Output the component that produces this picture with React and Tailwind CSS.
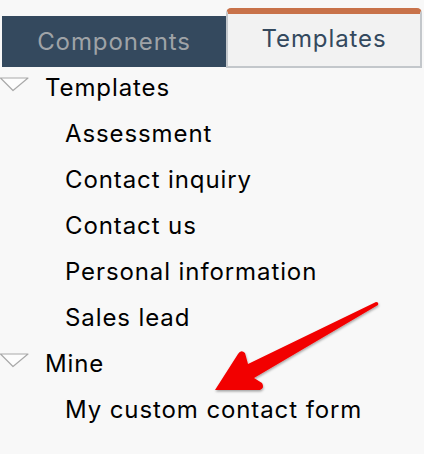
const font = { fontFamily: "Inter, 'Open Sans', sans-serif" };

const Caret = () => (
  <svg width="29" height="15" viewBox="0 0 29 15" className="shrink-0">
    <path d="M0.5 1 L28 1 L13 13.5 Z" fill="#fdfdfd" stroke="#a9a9a9" strokeWidth="1.2" strokeLinejoin="round" />
  </svg>
);

const items = ["Assessment", "Contact inquiry", "Contact us", "Personal information", "Sales lead"];

const App = () => {
  return (
    <div className="relative w-[424px] h-[454px] bg-[#f8f8f8] overflow-hidden text-[24px] tracking-[0.9px]" style={font}>
      <div className="flex items-end pt-2 h-[68px]">
        <div className="ml-[2px] w-[224px] h-[51px] mb-[1px] bg-[#34495e] text-[#9fa3a7] flex items-center justify-center">
          Components
        </div>
        <div className="w-[196px] h-[60px] bg-[#f2f2f2] border-t-[6px] border-t-[#c8724a] border-x-2 border-b-2 border-x-[#c3c7cb] border-b-[#c3c7cb] rounded-t-[5px] text-[#34495e] flex items-center justify-center pb-[2px]">
          Templates
        </div>
      </div>

      <div className="-mt-[3px] text-black">
        <div className="h-[46px] flex items-center">
          <div className="self-start mt-[12px]"><Caret /></div>
          <span className="ml-4">Templates</span>
        </div>
        {items.map((t) => (
          <div key={t} className="h-[46px] flex items-center pl-[65px]">{t}</div>
        ))}
        <div className="h-[46px] flex items-center">
          <div className="self-start mt-[12px]"><Caret /></div>
          <span className="ml-4">Mine</span>
        </div>
        <div className="h-[46px] flex items-center pl-[65px]">My custom contact form</div>
      </div>

      <svg className="absolute left-0 top-0 pointer-events-none" width="424" height="454" viewBox="0 0 424 454">
        <defs>
          <filter id="sh" x="-20%" y="-20%" width="140%" height="140%">
            <feDropShadow dx="0.5" dy="1.5" stdDeviation="1" floodColor="#000" floodOpacity="0.35" />
          </filter>
        </defs>
        <path
          d="M215 390 L238 354 Q241 349 245 353 L248 364 L376 302 Q379 302 378 305 L254 378 L262 383 Q265 388 260 390 Z"
          fill="#f20000"
          filter="url(#sh)"
        />
      </svg>
    </div>
  );
};

export default App;
